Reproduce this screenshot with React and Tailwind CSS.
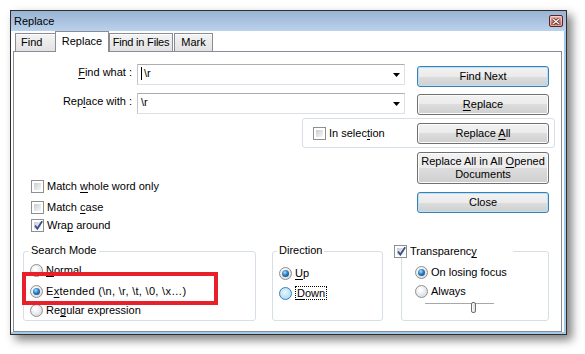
import React from 'react';

// mnemonic underline
const U = ({ children }) => <span className="underline underline-offset-[2px]">{children}</span>;

const Button = ({ children, primary, className = '' }) => (
  <div
    className={`w-[132px] rounded-[3px] border flex items-center justify-center text-center leading-[13px] bg-[linear-gradient(#f2f2f2_0%,#ebebeb_50%,#dddddd_50%,#cfcfcf_100%)] ${
      primary
        ? 'border-[#3c7fb1] shadow-[inset_0_0_0_1px_#b6e3f8]'
        : 'border-[#707070] shadow-[inset_0_0_0_1px_#fcfcfc]'
    } ${className}`}
  >
    <span>{children}</span>
  </div>
);

const Check = ({ checked }) => (
  <span className="relative flex w-[13px] h-[13px] flex-none border border-[#8f8f8f] bg-white p-[2px]">
    <span className="flex-1 bg-[linear-gradient(135deg,#c9cdd3,#f7f7f7)]" />
    {checked && (
      <svg className="absolute left-[1px] top-[0px]" width="11" height="11" viewBox="0 0 11 11">
        <path d="M2 5.5 L4.3 8.6 L9.2 1.2" fill="none" stroke="#3b4f8f" strokeWidth="1.8" />
      </svg>
    )}
  </span>
);

const Radio = ({ on, hover }) => (
  <span
    className={`flex w-[13px] h-[13px] flex-none rounded-full border items-center justify-center ${
      hover
        ? 'border-[#3c7fb1] bg-[radial-gradient(circle_at_45%_40%,#eaf7fe,#95d2f5)]'
        : 'border-[#8f8f8f] bg-[radial-gradient(circle_at_40%_35%,#ffffff_10%,#cdd0d3)]'
    }`}
  >
    {on && (
      <span className="w-[7px] h-[7px] rounded-full bg-[radial-gradient(circle_at_40%_35%,#a9e1ff,#2a7bc4_45%,#0b3a73)]" />
    )}
  </span>
);

const Option = ({ children, on, hover, className = '' }) => (
  <div className={`flex items-center gap-[3px] h-[13px] leading-[13px] ${className}`}>
    <Radio on={on} hover={hover} />
    <span>{children}</span>
  </div>
);

const CheckRow = ({ children, checked, className = '' }) => (
  <div className={`flex items-center gap-[3px] h-[13px] leading-[13px] ${className}`}>
    <Check checked={checked} />
    <span>{children}</span>
  </div>
);

const Combo = ({ children }) => (
  <div className="ml-[5px] w-[268px] h-[21px] border border-[#dde1e7] border-t-[#abadb3] border-l-[#c2c6cc] bg-white flex items-start pl-[3px] pr-[4px] pt-[2px] leading-[13px]">
    <span className="flex-1">{children}</span>
    <svg className="self-center -mt-[2px]" width="7" height="4" viewBox="0 0 7 4">
      <path d="M0 0h7L3.5 4z" fill="#000" />
    </svg>
  </div>
);

const Tab = ({ children, className = '' }) => (
  <div
    className={`h-[18px] border border-b-0 border-[#898c95] bg-[linear-gradient(#f4f4f4,#e2e2e2)] shadow-[inset_0_1px_0_#ffffff] flex items-center leading-[13px] ${className}`}
  >
    {children}
  </div>
);

export default function App() {
  return (
    <div className="w-[585px] h-[354px] bg-white pl-[10px] pt-[10px] font-['Liberation_Sans',Arial,sans-serif] text-[11px] text-black">
      <div className="w-[557px] h-[325px] border border-[#2f2f2f] flex flex-col shadow-[5px_5px_9px_rgba(0,0,0,0.5)]">
        {/* title bar */}
        <div className="h-[20px] flex items-center justify-between pl-[3px] pr-[3px] bg-[linear-gradient(#99b3d3,#bad2eb)]">
          <span className="leading-[13px]">Replace</span>
          <div className="w-[14px] h-[12px] rounded-[2px] border border-[#5b2424] bg-[linear-gradient(#eab0a8,#c4554a)] shadow-[inset_0_0_0_1px_rgba(255,255,255,0.45)] flex items-center justify-center">
            <svg width="8" height="7" viewBox="0 0 8 7">
              <path d="M1 1l6 5M7 1L1 6" stroke="#3a1010" strokeWidth="2.6" />
              <path d="M1 1l6 5M7 1L1 6" stroke="#ffffff" strokeWidth="1.4" />
            </svg>
          </div>
        </div>

        {/* body */}
        <div className="flex-1 flex flex-col bg-white pl-[2px] pr-[2px] border-r-2 border-b-2 border-[#a3cbe9]">
          {/* tabs */}
          <div className="h-[20px] flex items-end pl-[2px]">
            <Tab className="w-[41px] pl-[5px]">Find</Tab>
            <div className="relative z-10 -ml-px -mb-px w-[54px] h-[21px] border border-b-0 border-[#898c95] bg-white flex items-center justify-center leading-[13px] pb-[2px]">
              Replace
            </div>
            <Tab className="w-[64px] justify-center tracking-[-0.2px]">Find in Files</Tab>
            <Tab className="ml-[1px] w-[39px] justify-center">Mark</Tab>
          </div>

          {/* tab panel */}
          <div className="relative w-[549px] h-[281px] border border-[#898c95] bg-white pt-[12px]">
            <div className="flex items-start">
              <div className="w-[118px] text-right leading-[13px] pt-[2px]">
                <U>F</U>ind what :
              </div>
              <Combo>
                <span className="inline-block w-px h-[13px] bg-black align-top mr-[2px]" />
                {'\\r'}
              </Combo>
              <Button primary className="ml-[12px] mt-[2px] h-[21px]">Find Next</Button>
            </div>

            <div className="flex items-start mt-[6px]">
              <div className="w-[118px] text-right leading-[13px] pt-[2px]">
                Rep<U>l</U>ace with :
              </div>
              <Combo>{'\\r'}</Combo>
              <Button className="ml-[12px] mt-[1px] h-[21px]">
                <U>R</U>eplace
              </Button>
            </div>

            <div className="ml-[288px] mt-[3px] w-[253px] h-[30px] border border-[#d5dfe5] rounded-[3px] flex items-center pl-[10px] pr-[5px]">
              <CheckRow>
                In selec<U>t</U>ion
              </CheckRow>
              <Button className="ml-auto h-[21px]">
                Replace <U>A</U>ll
              </Button>
            </div>

            <div className="flex justify-between mt-[4px] pr-[12px]">
              <div className="pl-[17px] pt-[28px]">
                <CheckRow>
                  Match <U>w</U>hole word only
                </CheckRow>
                <CheckRow className="mt-[8px]">
                  Match <U>c</U>ase
                </CheckRow>
                <CheckRow checked className="mt-[5px]">
                  Wra<U>p</U> around
                </CheckRow>
              </div>
              <div>
                <Button className="h-[32px]">
                  Replace All in All <U>O</U>pened
                  <br />
                  Documents
                </Button>
                <Button primary className="mt-[8px] h-[21px]">Close</Button>
              </div>
            </div>

            {/* group boxes */}
            <div className="flex mt-[19px] pl-[9px]">
              <div className="relative w-[233px] h-[70px] border border-[#d5dfe5] rounded-[3px] pl-[6px] pt-[12px]">
                <span className="absolute left-[4px] -top-[8px] px-[3px] bg-white leading-[13px]">Search Mode</span>
                <Option>
                  <U>N</U>ormal
                </Option>
                <Option on className="mt-[8px] tracking-[0.3px]">
                  E<U>x</U>tended (\n, \r, \t, \0, \x…)
                </Option>
                <Option className="mt-[6px]">
                  Re<U>g</U>ular expression
                </Option>
              </div>

              <div className="relative ml-[16px] w-[111px] h-[70px] border border-[#d5dfe5] rounded-[3px] pl-[6px] pt-[15px]">
                <span className="absolute left-[4px] -top-[8px] px-[2px] bg-white leading-[13px]">Direction</span>
                <Option on>
                  <U>U</U>p
                </Option>
                <Option hover className="mt-[7px]">
                  <span className="border border-dotted border-black px-px">
                    <U>D</U>own
                  </span>
                </Option>
              </div>

              <div className="relative ml-[18px] w-[148px] h-[70px] border border-[#d5dfe5] rounded-[3px] pl-[13px] pt-[14px]">
                <div className="absolute -left-[8px] -top-[7px] w-[119px] bg-white flex items-center gap-[3px] leading-[13px]">
                  <Check checked />
                  <span>
                    Transparenc<U>y</U>
                  </span>
                </div>
                <Option on>On losing focus</Option>
                <Option className="mt-[6px]">Always</Option>
                <div className="relative ml-[10px] mt-[5px] w-[69px] h-[10px]">
                  <div className="mt-[4px] h-px bg-[#a8a8a8] shadow-[0_1px_0_#ffffff]" />
                  <div className="absolute left-[46px] -top-[1px] w-[5px] h-[11px] rounded-[2px] border border-[#707070] bg-[linear-gradient(90deg,#fbfbfb,#dcdcdc)]" />
                </div>
              </div>
            </div>

            {/* red annotation */}
            <div className="absolute left-[8px] top-[220px] w-[196px] h-[33px] border-4 border-[#e8202a] pointer-events-none" />
          </div>
        </div>
      </div>
    </div>
  );
}
